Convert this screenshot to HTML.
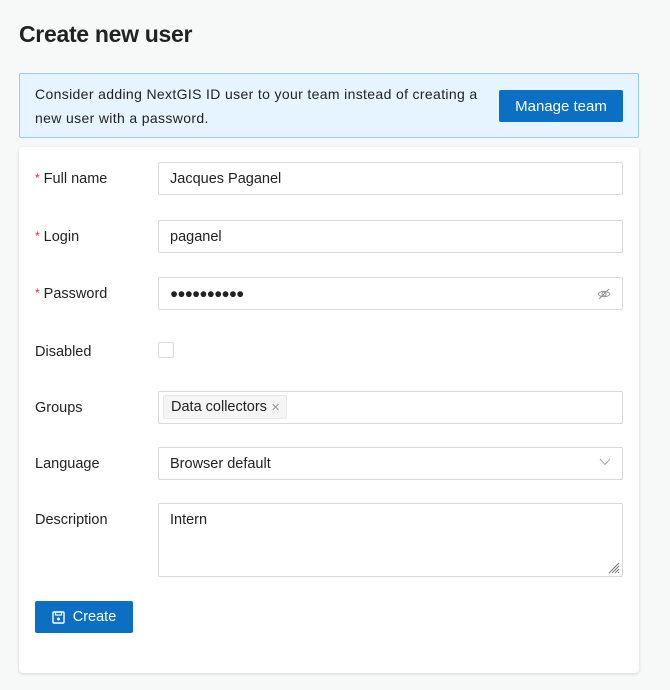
<!DOCTYPE html>
<html><head><style>
*{box-sizing:border-box;margin:0;padding:0}
body{width:670px;height:690px;background:#f7f8f8;font-family:"Liberation Sans",sans-serif;color:#222;font-size:14px;position:relative;overflow:hidden}
.abs{position:absolute}
h1{position:absolute;left:19px;top:21px;font-size:23px;font-weight:bold;color:#222;letter-spacing:-0.3px}
.alert{left:19px;top:73px;width:620px;height:65px;background:#e6f4ff;border:1px solid #91caff;border-radius:2px}
.alert p{position:absolute;left:15px;top:8px;width:452px;line-height:24px;font-size:14px;letter-spacing:0.35px}
.btn{background:#0b6fc4;color:#fff;border-radius:2px;font-size:15px;display:flex;align-items:center;justify-content:center}
.card{left:19px;top:147px;width:620px;height:526px;background:#fff;border-radius:4px;box-shadow:0 1px 3px rgba(0,0,0,.15)}
.lbl{position:absolute;left:35px;font-size:14.5px;color:#222}
.lbl .r{color:#f5222d;font-size:12px;margin-right:4px;vertical-align:1px}
.in{position:absolute;left:158px;width:465px;height:33px;border:1px solid #d9d9d9;border-radius:2px;background:#fff;padding-left:11px;line-height:32px;font-size:14.5px}
</style></head><body>
<h1>Create new user</h1>
<div class="abs alert"><p>Consider adding NextGIS ID user to your team instead of creating a new user with a password.</p>
<div class="abs btn" style="left:479px;top:16px;width:124px;height:32px">Manage team</div></div>
<div class="abs card"></div>
<div class="lbl" style="top:171px"><span class="r">*</span>Full name</div>
<div class="in" style="top:162px">Jacques Paganel</div>
<div class="lbl" style="top:229px"><span class="r">*</span>Login</div>
<div class="in" style="top:220px">paganel</div>
<div class="lbl" style="top:286px"><span class="r">*</span>Password</div>
<div class="in" style="top:277px;font-size:13.5px;letter-spacing:-0.8px">●●●●●●●●●●
<svg class="abs" style="right:11px;top:10px" width="14" height="12" viewBox="0 0 14 12"><path d="M1 6C3 2.5 11 2.5 13 6C11 9.5 3 9.5 1 6Z" fill="none" stroke="#999" stroke-width="1.1"/><circle cx="7" cy="6" r="2" fill="none" stroke="#999" stroke-width="1.1"/><path d="M2 11L12 1" stroke="#999" stroke-width="1.1"/></svg></div>
<div class="lbl" style="top:344px">Disabled</div>
<div class="abs" style="left:158px;top:342px;width:16px;height:16px;border:1px solid #d9d9d9;border-radius:2px;background:#fff"></div>
<div class="lbl" style="top:400px">Groups</div>
<div class="in" style="top:391px;padding-left:4px"><span style="display:inline-block;background:#f5f5f5;border:1px solid #e8e8e8;border-radius:2px;height:24px;line-height:22px;margin-top:3px;padding:0 6px 0 7px;vertical-align:top">Data collectors <span style="color:#999;font-size:11px">✕</span></span></div>
<div class="lbl" style="top:456px">Language</div>
<div class="in" style="top:447px">Browser default
<svg class="abs" style="right:11px;top:10px" width="12" height="8" viewBox="0 0 12 8"><path d="M1 1L6 6.5L11 1" fill="none" stroke="#aaa" stroke-width="1"/></svg></div>
<div class="lbl" style="top:512px">Description</div>
<div class="in" style="top:503px;height:74px;line-height:normal;padding-top:8px">Intern
<svg class="abs" style="right:2px;bottom:2px" width="12" height="12" viewBox="0 0 12 12"><path d="M11 1L1 11M11 4L4 11M11 7L7 11M11 10L10 11" stroke="#777" stroke-width="1"/></svg></div>
<div class="abs btn" style="left:35px;top:601px;width:98px;height:32px;font-size:14.5px">
<svg width="13" height="13" viewBox="0 0 13 13" style="margin-right:8px"><rect x="1" y="1" width="11" height="11" rx="1" fill="none" stroke="#fff" stroke-width="1.4"/><rect x="3.5" y="1" width="6" height="3" fill="none" stroke="#fff" stroke-width="1.2"/><circle cx="6.5" cy="8" r="1.5" fill="#fff"/></svg>Create</div>
</body></html>
